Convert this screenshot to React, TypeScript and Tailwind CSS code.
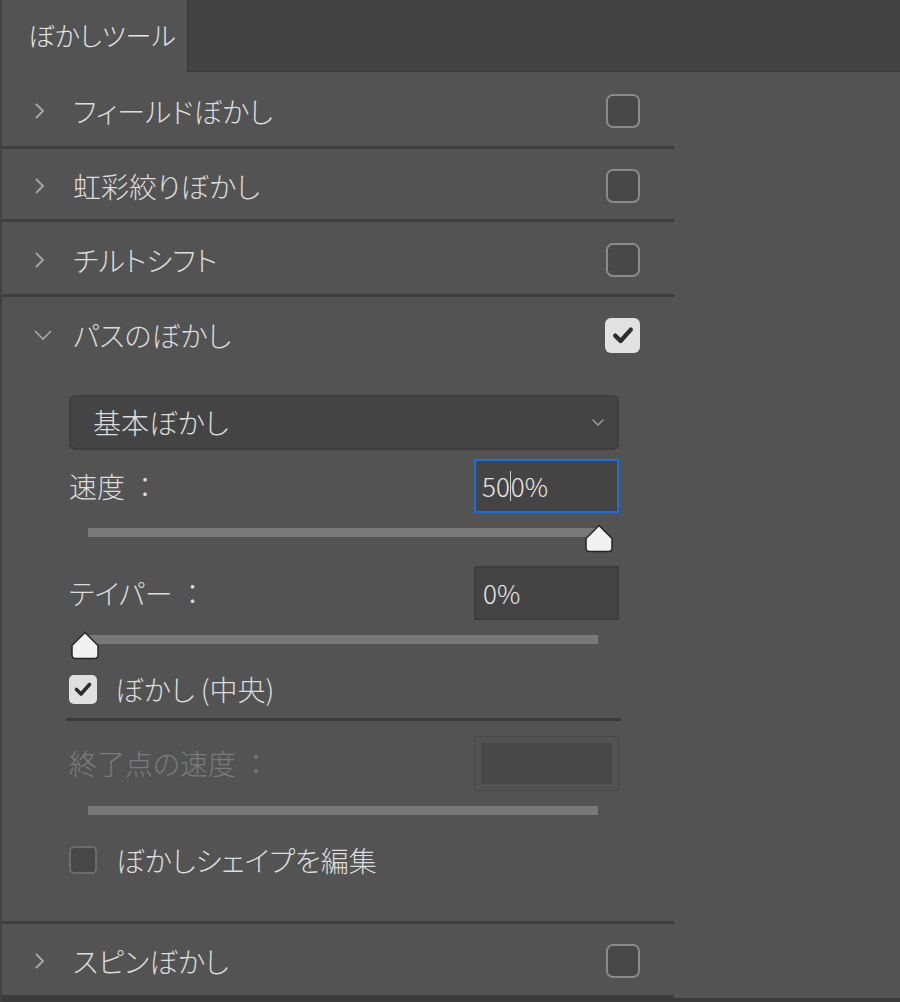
import React from "react";

const font = "[font-family:'Noto_Sans_CJK_JP','Noto_Sans',sans-serif] [font-feature-settings:'palt']";

function ChevronRight() {
  return (
    <svg width="14" height="18" viewBox="0 0 14 18" fill="none">
      <path d="M3 2 L10 9 L3 16" stroke="#a8a8a8" strokeWidth="1.8" />
    </svg>
  );
}

function ChevronDown() {
  return (
    <svg width="20" height="12" viewBox="0 0 20 12" fill="none">
      <path d="M2 2 L10 10 L18 2" stroke="#a8a8a8" strokeWidth="1.6" />
    </svg>
  );
}

function Check({ size = 20 }: { size?: number }) {
  return (
    <svg width={size} height={size} viewBox="0 0 20 20" fill="none">
      <path d="M3.5 10.5 L8 15 L16.5 5.5" stroke="#2e2e2e" strokeWidth="3.6" strokeLinecap="round" strokeLinejoin="round" />
    </svg>
  );
}

function BigBox({ checked }: { checked?: boolean }) {
  if (checked) {
    return (
      <div className="w-[35px] h-[35px] rounded-[6px] bg-[#e2e2e2] flex items-center justify-center">
        <Check size={24} />
      </div>
    );
  }
  return <div className="w-[34px] h-[34px] rounded-[7px] border-2 border-[#8a8a8a] bg-[#484848]" />;
}

function SmallBox({ checked }: { checked?: boolean }) {
  if (checked) {
    return (
      <div className="w-[28px] h-[29px] rounded-[5px] bg-[#e0e0e0] flex items-center justify-center">
        <Check size={20} />
      </div>
    );
  }
  return <div className="w-[28px] h-[28px] rounded-[5px] border-2 border-[#6c6c6c] bg-[#474747]" />;
}

function Thumb() {
  return (
    <svg width="30" height="29" viewBox="0 0 30 29">
      <path
        d="M15 1.5 L28 14.5 V24 Q28 27.5 24.5 27.5 H5.5 Q2 27.5 2 24 V14.5 Z"
        fill="#f1f1f1"
        stroke="#262626"
        strokeWidth="1.5"
      />
    </svg>
  );
}

function Slider({ thumb }: { thumb?: "start" | "end" }) {
  return (
    <div className="relative h-[40px]">
      <div className="absolute left-[19px] top-[15px] w-[510px] h-[9px] bg-[#787878]" />
      {thumb === "end" && (
        <div className="absolute left-[515px] top-[11px]">
          <Thumb />
        </div>
      )}
      {thumb === "start" && (
        <div className="absolute left-[1px] top-[11px]">
          <Thumb />
        </div>
      )}
    </div>
  );
}

function HeaderRow({ label, open, checked, h = 71 }: { label: string; open?: boolean; checked?: boolean; h?: number }) {
  return (
    <div className="w-[672px] flex items-center pl-[31px] pr-[34px]" style={{ height: h }}>
      <div className="w-[40px] flex items-center pt-[4px]">{open ? <ChevronDown /> : <ChevronRight />}</div>
      <div className="flex-1 text-[28px] font-light text-[#dcdcdc] leading-none pt-[4px]">{label}</div>
      <div className="pt-[4px]">
        <BigBox checked={checked} />
      </div>
    </div>
  );
}

function Label({ text, dim }: { text: string; dim?: boolean }) {
  return (
    <span className={`text-[28px] font-light leading-none ${dim ? "text-[#7b7b7b]" : ""}`}>
      {text}
      <span className="[font-feature-settings:normal] ml-[6px]">：</span>
    </span>
  );
}

function Sep() {
  return <div className="w-[672px] h-[3px] bg-[#3d3d3d]" />;
}

export default function App() {
  return (
    <div className={`w-[900px] h-[1002px] bg-[#535353] border-l-2 border-[#414141] overflow-hidden flex flex-col ${font}`}>
      {/* tab bar */}
      <div className="h-[72px] flex bg-[#434343] shrink-0">
        <div className="w-[185px] bg-[#535353] flex items-center pl-[26px] pb-[4px] text-[26px] font-light text-[#e4e4e4]">
          ぼかしツール
        </div>
        <div className="flex-1 border-l border-b border-[#383838]" />
      </div>

      <HeaderRow label="フィールドぼかし" h={74} />
      <Sep />
      <HeaderRow label="虹彩絞りぼかし" />
      <Sep />
      <HeaderRow label="チルトシフト" h={72} />
      <Sep />

      <div className="w-[672px]">
        <HeaderRow label="パスのぼかし" open checked h={73} />
        <div className="ml-[67px] w-[550px] pb-[47px] text-[#dcdcdc]">
          <div className="mt-[25px] h-[55px] rounded-[6px] border-2 border-[#3e3e3e] bg-[#444444] flex items-center pl-[22px] pr-[12px]">
            <span className="flex-1 text-[28px] font-light leading-none">基本ぼかし</span>
            <svg width="14" height="9" viewBox="0 0 14 9" fill="none">
              <path d="M1.5 1.5 L7 7 L12.5 1.5" stroke="#a0a0a0" strokeWidth="1.4" />
            </svg>
          </div>

          <div className="mt-[9px] flex items-center justify-between">
            <Label text="速度" />
            <div className="w-[145px] h-[54px] border-2 border-[#1b6fdc] bg-[#444444] flex items-center pl-[6px] text-[26px] font-light text-[#e6e6e6]">
              50<span className="w-px h-[30px] bg-[#cfcfcf]" />0%
            </div>
          </div>
          <Slider thumb="end" />

          <div className="mt-[13px] flex items-center justify-between">
            <Label text="テイパー" />
            <div className="w-[145px] h-[54px] border-2 border-[#3e3e3e] bg-[#444444] flex items-center pl-[7px] text-[26px] font-light text-[#e6e6e6]">
              0%
            </div>
          </div>
          <Slider thumb="start" />

          <div className="mt-[15px] flex items-center gap-[18px]">
            <SmallBox checked />
            <span className="text-[28px] font-light leading-none">ぼかし (中央)</span>
          </div>

          <div className="mt-[14px] -ml-[3px] w-[555px] h-[3px] bg-[#3a3a3a]" />

          <div className="mt-[15px] flex items-center justify-between">
            <Label text="終了点の速度" dim />
            <div className="w-[145px] h-[55px] border border-[#474747] p-[6px]">
              <div className="w-full h-full bg-[#474747]" />
            </div>
          </div>
          <Slider />

          <div className="mt-[15px] flex items-center gap-[19px]">
            <SmallBox />
            <span className="text-[28px] font-light leading-none">ぼかしシェイプを編集</span>
          </div>
        </div>
      </div>
      <Sep />
      <HeaderRow label="スピンぼかし" h={72} />
      <Sep />
      <div className="flex-1 border-t-4 border-[#3a3a3a]" />
    </div>
  );
}
